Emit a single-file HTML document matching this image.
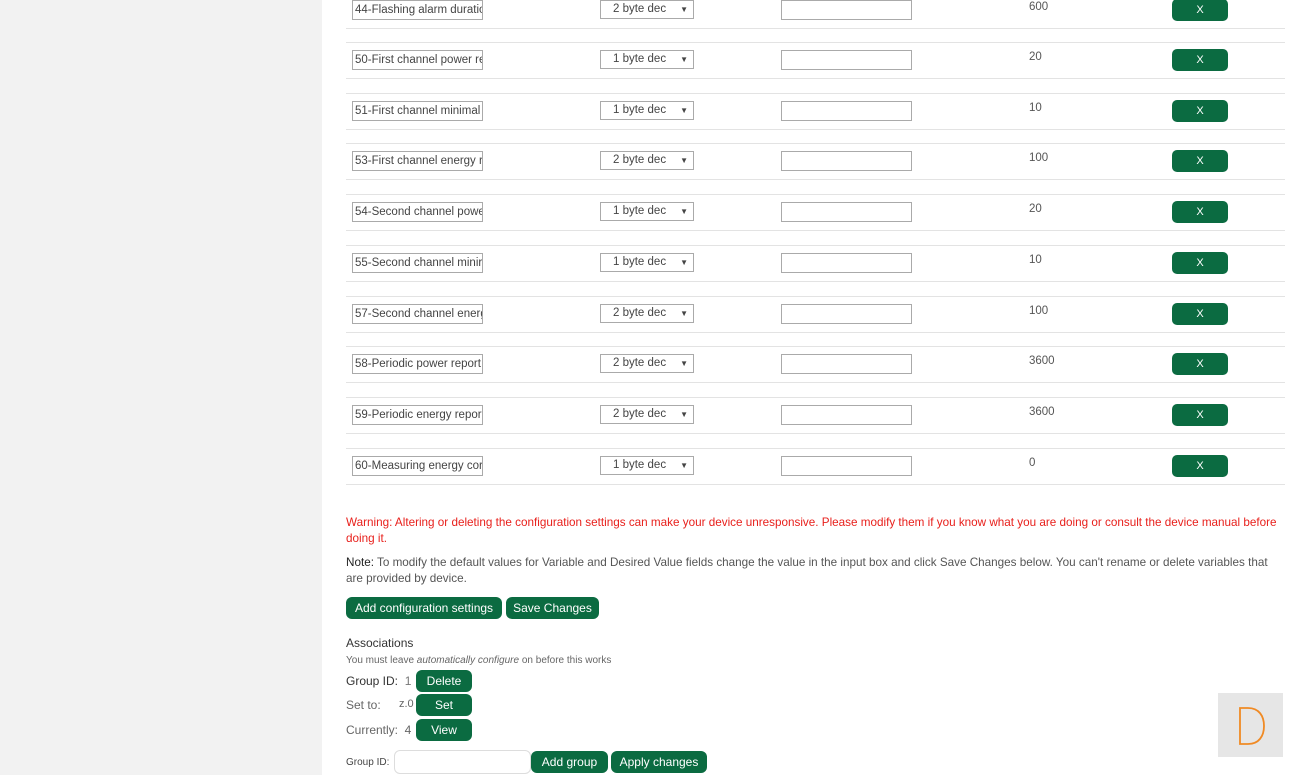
<!DOCTYPE html>
<html><head><meta charset="utf-8"><style>
body{margin:0;width:1300px;height:775px;overflow:hidden;background:#fff;font-family:"Liberation Sans",sans-serif;font-size:12px;color:#333;position:relative}
.side{position:absolute;left:0;top:0;width:322px;height:775px;background:#f2f2f2}
.row{position:absolute;left:346px;width:939px;height:35px;border-top:1px solid #e3e3e3;border-bottom:1px solid #e3e3e3}
.row .n{position:absolute;left:6px;top:7px;width:127px;height:18px;border:1px solid #aaa;font-size:11.5px;line-height:18px;padding-left:2px;white-space:nowrap;overflow:hidden;color:#444}
.row .s{position:absolute;left:254px;top:7px;width:92px;height:17px;border:1px solid #aaa;font-size:11.5px;line-height:17px;color:#444}
.row .s span{position:absolute;left:12px}
.row .s i{position:absolute;right:5px;font-style:normal;font-size:8px}
.row .t{position:absolute;left:435px;top:7px;width:129px;height:18px;border:1px solid #aaa}
.row .v{position:absolute;left:683px;top:8px;font-size:11.5px;color:#555}
.row .x{position:absolute;left:826px;top:6px;width:56px;height:22px;border-radius:5px;background:#0b6b41;color:#fff;text-align:center;line-height:22px;font-size:11px}
.btn{position:absolute;background:#0b6b41;color:#fff;border-radius:6px;text-align:center;font-size:12px;height:22px;line-height:22px}
.tx{position:absolute;left:346px;white-space:nowrap}
</style></head><body>
<div class="side"></div>

<div class="row" style="top:-8px"><div class="n">44-Flashing alarm duratio</div><div class="s"><span>2 byte dec</span><i>▼</i></div><div class="t"></div><div class="v">600</div><div class="x">X</div></div>
<div class="row" style="top:42px"><div class="n">50-First channel power re</div><div class="s"><span>1 byte dec</span><i>▼</i></div><div class="t"></div><div class="v">20</div><div class="x">X</div></div>
<div class="row" style="top:92.7px"><div class="n">51-First channel minimal</div><div class="s"><span>1 byte dec</span><i>▼</i></div><div class="t"></div><div class="v">10</div><div class="x">X</div></div>
<div class="row" style="top:143.4px"><div class="n">53-First channel energy r</div><div class="s"><span>2 byte dec</span><i>▼</i></div><div class="t"></div><div class="v">100</div><div class="x">X</div></div>
<div class="row" style="top:194.1px"><div class="n">54-Second channel powe</div><div class="s"><span>1 byte dec</span><i>▼</i></div><div class="t"></div><div class="v">20</div><div class="x">X</div></div>
<div class="row" style="top:244.8px"><div class="n">55-Second channel minir</div><div class="s"><span>1 byte dec</span><i>▼</i></div><div class="t"></div><div class="v">10</div><div class="x">X</div></div>
<div class="row" style="top:295.5px"><div class="n">57-Second channel energ</div><div class="s"><span>2 byte dec</span><i>▼</i></div><div class="t"></div><div class="v">100</div><div class="x">X</div></div>
<div class="row" style="top:346.2px"><div class="n">58-Periodic power report</div><div class="s"><span>2 byte dec</span><i>▼</i></div><div class="t"></div><div class="v">3600</div><div class="x">X</div></div>
<div class="row" style="top:396.9px"><div class="n">59-Periodic energy repor</div><div class="s"><span>2 byte dec</span><i>▼</i></div><div class="t"></div><div class="v">3600</div><div class="x">X</div></div>
<div class="row" style="top:447.6px"><div class="n">60-Measuring energy cor</div><div class="s"><span>1 byte dec</span><i>▼</i></div><div class="t"></div><div class="v">0</div><div class="x">X</div></div>

<div class="tx" style="top:515px;color:#e8201c;line-height:16px;white-space:normal;width:935px;font-size:11.7px">Warning: Altering or deleting the configuration settings can make your device unresponsive. Please modify them if you know what you are doing or consult the device manual before doing it.</div>
<div class="tx" style="top:555px;line-height:16px;white-space:normal;width:935px;color:#555;font-size:11.7px"><b style="font-weight:normal;color:#222">Note:</b> To modify the default values for Variable and Desired Value fields change the value in the input box and click Save Changes below. You can't rename or delete variables that are provided by device.</div>
<div class="btn" style="left:346px;top:597px;width:156px">Add configuration settings</div>
<div class="btn" style="left:506px;top:597px;width:93px">Save Changes</div>
<div class="tx" style="top:636px;color:#333">Associations</div>
<div class="tx" style="top:655px;font-size:10px;color:#666">You must leave <i>automatically configure</i> on before this works</div>
<div class="tx" style="top:674px;color:#333">Group ID: <span style="color:#777">&nbsp;1</span></div>
<div class="btn" style="left:416px;top:670px;width:56px">Delete</div>
<div class="tx" style="top:698px;color:#666">Set to:</div>
<div class="tx" style="left:399px;top:698px;color:#666;font-size:11px">z.0</div>
<div class="btn" style="left:416px;top:694px;width:56px">Set</div>
<div class="tx" style="top:723px;color:#666">Currently: &nbsp;4</div>
<div class="btn" style="left:416px;top:719px;width:56px">View</div>
<div class="tx" style="top:757px;font-size:10px;color:#444">Group ID:</div>
<div style="position:absolute;left:394px;top:750px;width:135px;height:22px;border:1px solid #ddd;border-radius:6px"></div>
<div class="btn" style="left:531px;top:751px;width:77px">Add group</div>
<div class="btn" style="left:611px;top:751px;width:96px">Apply changes</div>

<div style="position:absolute;left:1218px;top:693px;width:65px;height:64px;background:#e6e6e6"></div>
<svg style="position:absolute;left:1218px;top:693px" width="65" height="64"><path d="M22 15 V51 H30 C41 51 46 43 46 33 C46 23 41 15 30 15 Z" fill="none" stroke="#f08a24" stroke-width="1.8"/></svg>
</body></html>
